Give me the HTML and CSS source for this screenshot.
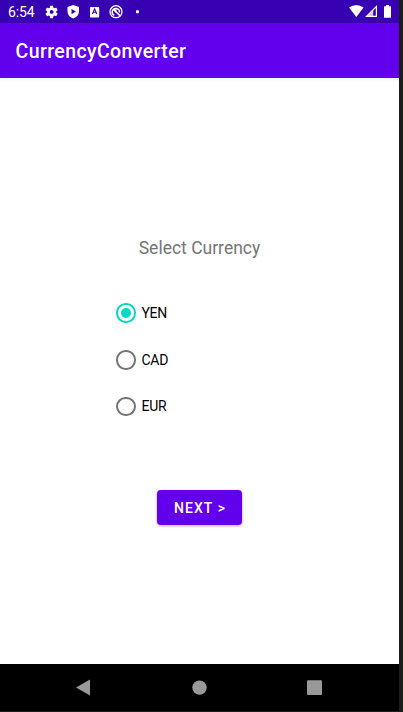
FILE: index.html
```html
<!DOCTYPE html>
<html lang="en">
<head>
<meta charset="utf-8">
<title>CurrencyConverter</title>
<link rel="stylesheet" href="styles.css">
</head>
<body>
<div class="phone">
  <div class="status">
    <span class="clock">6:54</span>
    <svg class="notifications" width="100" height="23" viewBox="42 0 100 23" fill="#fff">
      <g transform="translate(44.2 4.500) scale(.62)"><path d="M19.400 13a7.500 7.500 0 0 0 0-2l2.100-1.600a.5.500 0 0 0 .1-.6l-2-3.500a.5.500 0 0 0-.6-.2l-2.500 1a7.300 7.300 0 0 0-1.700-1l-.4-2.600a.5.500 0 0 0-.5-.5h-4a.5.500 0 0 0-.5.500L9.100 5.100a7.700 7.700 0 0 0-1.700 1l-2.500-1a.5.500 0 0 0-.6.200l-2 3.500a.5.500 0 0 0 .1.600L4.600 11a7.900 7.900 0 0 0 0 2l-2.200 1.600a.5.500 0 0 0-.1.600l2 3.500c.1.200.4.300.6.200l2.500-1a7.300 7.300 0 0 0 1.700 1l.3 2.600c0 .3.300.5.500.5h4c.3 0 .5-.2.500-.5l.4-2.600a7.700 7.700 0 0 0 1.700-1l2.500 1c.2.100.5 0 .6-.2l2-3.500a.5.500 0 0 0-.1-.6zM12 15.100a3.100 3.100 0 1 1 0-6.200 3.100 3.100 0 0 1 0 6.200z"/></g>
      <path fill-rule="evenodd" d="M73.200 5 79 7v4.200c0 3.300-2 6-5.800 7.300-3.800-1.300-5.700-4-5.700-7.300V7zM71.500 9v5.200l4.400-2.600z"/>
      <rect x="90" y="7" width="9.200" height="10.500" rx=".7"/>
      <path d="M92.400 14 94.600 8.800 96.800 14M93.100 12.300h3" fill="none" stroke="#3700b3" stroke-width="1.100"/>
      <circle cx="116" cy="11.700" r="6" fill="none" stroke="#fff" stroke-width="1.300"/>
      <path d="M114.300 15.300A3.600 3.600 0 1 1 119.400 12.500M114.300 10l5.600 5.600" fill="none" stroke="#fff" stroke-width="1.500"/>
      <path d="M114 9.200h3l-.8 1.500 1.300 1.800-1.300.8-3-3z"/>
      <rect x="136" y="10.200" width="3" height="3" rx=".6"/>
    </svg>
    <svg class="signals" width="46" height="23" viewBox="347 0 46 23" fill="#fff">
      <path d="M349 7.600Q356.300 2.400 363.600 7.600L356.300 17z"/>
      <path d="M377 5V17H365zM375.800 8l-2.600 2.600v5.200h2.600z" fill-rule="evenodd"/>
      <path d="M373.200 10.600v5.200h-5.200z" fill="#3700b3" fill-opacity=".25"/>
      <path d="M386 5h3v1.200h1.500q.5 0 .5.500v10.600q0 .5-.5.500h-6q-.5 0-.5-.5V6.700q0-.5.500-.5H386z"/>
    </svg>
  </div>
  <header class="appbar"><h1>CurrencyConverter</h1></header>
  <main class="content">
    <p class="prompt">Select Currency</p>
    <div class="options" role="radiogroup">
      <div class="option selected" role="radio" aria-checked="true"><span class="ring"></span><span>YEN</span></div>
      <div class="option" role="radio" aria-checked="false"><span class="ring"></span><span>CAD</span></div>
      <div class="option" role="radio" aria-checked="false"><span class="ring"></span><span>EUR</span></div>
    </div>
    <button class="next">NEXT &gt;</button>
  </main>
  <nav class="navbar">
    <svg width="399" height="47" viewBox="0 0 399 47" fill="#999">
      <path d="M76 23.600 90 15.600V31.600z"/>
      <circle cx="199.500" cy="23.600" r="7.200"/>
      <rect x="307" y="16.200" width="15" height="14.800" rx="1"/>
    </svg>
  </nav>
</div>
</body>
</html>
```
FILE: styles.css
```css
* { box-sizing: border-box; }
body {
  margin: 0;
  width: 403px;
  height: 712px;
  overflow: hidden;
  background: #1c1c1c;
  font-family: Roboto, "Liberation Sans", sans-serif;
}
.phone {
  width: 399px;
  height: 711px;
  display: flex;
  flex-direction: column;
  background: #fff;
}
.status {
  height: 23px;
  background: #3700b3;
  color: #fff;
  display: flex;
  align-items: center;
  padding: 0 6px 0 8px;
}
.clock {
  width: 34px;
  font-size: 14px;
  letter-spacing: -.1px;
  line-height: 23px;
  padding-top: 1px;
}
.signals { margin-left: auto; }
.appbar {
  height: 55px;
  background: #6200ee;
  color: #fff;
  padding-left: 15.500px;
  display: flex;
  align-items: center;
  box-shadow: 0 1px 3px rgba(0, 0, 0, .08);
}
.appbar h1 {
  margin: 1px 0 0;
  font-size: 19.500px;
  font-weight: 500;
  letter-spacing: .4px;
}
.content {
  flex: 1;
  display: flex;
  flex-direction: column;
  align-items: center;
}
.prompt {
  margin: 158px 0 0;
  font-size: 17.500px;
  line-height: 24px;
  color: #757575;
}
.options {
  align-self: flex-start;
  margin: 29.250px 0 0 116px;
}
.option {
  height: 46.500px;
  display: flex;
  align-items: center;
  gap: 6px;
  font-size: 14px;
  line-height: 17px;
  letter-spacing: -.3px;
  color: #000;
}
.option.selected { height: 47.500px; }
.ring {
  width: 19.500px;
  height: 19.500px;
  border: 2px solid #757575;
  border-radius: 50%;
  display: grid;
  place-items: center;
}
.selected .ring { border-color: #03dac5; }
.selected .ring::after {
  content: "";
  width: 10px;
  height: 10px;
  border-radius: 50%;
  background: #03dac5;
}
.next {
  margin: 59.750px 0 0;
  width: 85px;
  height: 35.500px;
  padding: 2px 0 0 1px;
  border: 0;
  border-radius: 4px;
  background: #6200ee;
  color: #fff;
  font: 500 14px Roboto, sans-serif;
  letter-spacing: 1.100px;
  box-shadow: 0 1px 3px rgba(0, 0, 0, .35);
}
.navbar {
  height: 47px;
  background: #000;
}
.navbar svg { display: block; }
```
